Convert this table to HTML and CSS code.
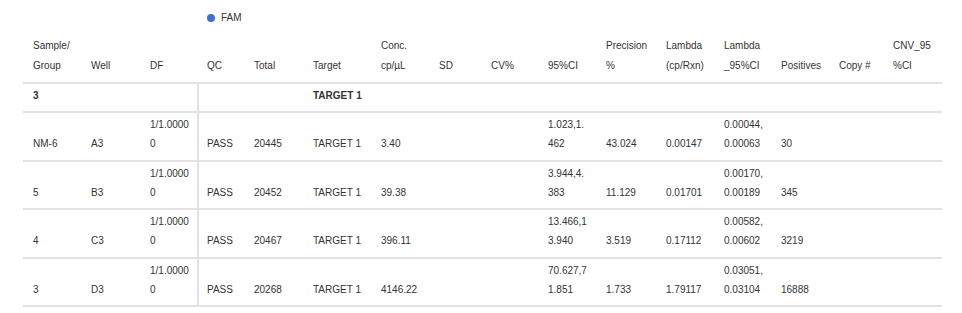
FILE: index.html
```html
<!DOCTYPE html>
<html>
<head>
<meta charset="utf-8">
<link rel="stylesheet" href="styles.css">
</head>
<body>
<div class="page">
  <div class="legend"><span class="dot"></span><span class="legend-label">FAM</span></div>
  <table class="results">
    <colgroup>
      <col style="width:58px"><col style="width:59px"><col style="width:57px"><col style="width:47px">
      <col style="width:59px"><col style="width:68px"><col style="width:58px"><col style="width:52px">
      <col style="width:57px"><col style="width:58px"><col style="width:60px"><col style="width:58px">
      <col style="width:57px"><col style="width:58px"><col style="width:54px"><col style="width:59px">
    </colgroup>
    <thead>
      <tr>
        <th>Sample/<br>Group</th><th>Well</th><th>DF</th><th>QC</th><th>Total</th><th>Target</th>
        <th>Conc.<br>cp/µL</th><th>SD</th><th>CV%</th><th>95%CI</th><th>Precision<br>%</th>
        <th>Lambda<br>(cp/Rxn)</th><th>Lambda<br>_95%CI</th><th>Positives</th><th>Copy #</th><th>CNV_95<br>%CI</th>
      </tr>
    </thead>
    <tbody>
      <tr class="group">
        <td colspan="3">3</td><td class="sep"></td><td></td><td>TARGET 1</td>
        <td></td><td></td><td></td><td></td><td></td><td></td><td></td><td></td><td></td><td></td>
      </tr>
      <tr>
        <td>NM-6</td><td>A3</td><td>1/1.0000<br>0</td><td class="sep">PASS</td><td>20445</td><td>TARGET 1</td>
        <td>3.40</td><td></td><td></td><td>1.023,1.<br>462</td><td>43.024</td><td>0.00147</td><td>0.00044,<br>0.00063</td><td>30</td><td></td><td></td>
      </tr>
      <tr>
        <td>5</td><td>B3</td><td>1/1.0000<br>0</td><td class="sep">PASS</td><td>20452</td><td>TARGET 1</td>
        <td>39.38</td><td></td><td></td><td>3.944,4.<br>383</td><td>11.129</td><td>0.01701</td><td>0.00170,<br>0.00189</td><td>345</td><td></td><td></td>
      </tr>
      <tr>
        <td>4</td><td>C3</td><td>1/1.0000<br>0</td><td class="sep">PASS</td><td>20467</td><td>TARGET 1</td>
        <td>396.11</td><td></td><td></td><td>13.466,1<br>3.940</td><td>3.519</td><td>0.17112</td><td>0.00582,<br>0.00602</td><td>3219</td><td></td><td></td>
      </tr>
      <tr>
        <td>3</td><td>D3</td><td>1/1.0000<br>0</td><td class="sep">PASS</td><td>20268</td><td>TARGET 1</td>
        <td>4146.22</td><td></td><td></td><td>70.627,7<br>1.851</td><td>1.733</td><td>1.79117</td><td>0.03051,<br>0.03104</td><td>16888</td><td></td><td></td>
      </tr>
    </tbody>
  </table>
</div>
</body>
</html>
```

FILE: styles.css
```css
html, body {
  margin: 0;
  padding: 0;
  background: #ffffff;
}

.page {
  padding: 8px 0 0 23px;
  font-family: "Liberation Sans", Arial, sans-serif;
  font-size: 10px;
  color: #333333;
}

.legend {
  display: flex;
  align-items: center;
  height: 20px;
  margin-left: 184px;
  gap: 6px;
}

.dot {
  width: 8px;
  height: 8px;
  border-radius: 50%;
  background: #3f6fd1;
}

.legend-label {
  line-height: 20px;
}

.results {
  table-layout: fixed;
  width: 919px;
  border-collapse: separate;
  border-spacing: 0;
  margin-top: 8px;
}

.results th {
  font-weight: normal;
  text-align: left;
  vertical-align: bottom;
  line-height: 20px;
  padding: 0 8px 6px 10px;
  border-bottom: 2px solid #e2e2e2;
}

.results td {
  text-align: left;
  vertical-align: bottom;
  line-height: 19px;
  padding: 2px 8px 6.5px 10px;
  border-bottom: 2px solid #e2e2e2;
}

.results tr.group td {
  font-weight: bold;
  padding-bottom: 6px;
}

.results td.sep {
  border-left: 2px solid #e2e2e2;
  padding-left: 8px;
}
```
